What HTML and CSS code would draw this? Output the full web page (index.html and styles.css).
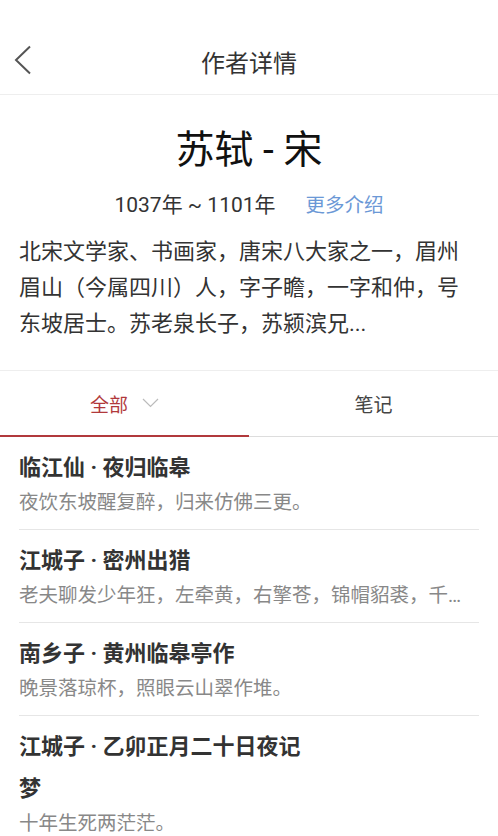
FILE: index.html
```html
<!DOCTYPE html>
<html lang="zh-CN">
<head>
  <meta charset="UTF-8">
  <meta name="viewport" content="width=device-width, initial-scale=1.0">
  <title>作者详情</title>
  <link rel="stylesheet" href="styles.css">
</head>
<body>

  <div class="header">
    <div class="header-bar">
      <svg class="back" width="18" height="30" viewBox="0 0 18 30">
        <polyline points="16,1.5 2,15 16,28.5" fill="none" stroke="#555" stroke-width="2"/>
      </svg>
      <h1>作者详情</h1>
    </div>
  </div>

  <div class="profile">
    <h2 class="name">苏轼 - 宋</h2>
    <div class="dates">
      <span class="years">1037年 ~ 1101年</span>
      <a class="more">更多介绍</a>
    </div>
    <p class="intro">北宋文学家、书画家，唐宋八大家之一，眉州眉山（今属四川）人，字子瞻，一字和仲，号东坡居士。苏老泉长子，苏颍滨兄...</p>
  </div>

  <div class="tabs">
    <div class="tab active">
      全部
      <svg class="arrow" width="17" height="10" viewBox="0 0 17 10">
        <polyline points="1,1 8.5,8.5 16,1" fill="none" stroke="#bbb" stroke-width="1.2"/>
      </svg>
    </div>
    <div class="tab">笔记</div>
  </div>

  <div class="list">
    <div class="item">
      <div class="item-title">临江仙 · 夜归临皋</div>
      <div class="item-text">夜饮东坡醒复醉，归来仿佛三更。</div>
    </div>
    <div class="item">
      <div class="item-title">江城子 · 密州出猎</div>
      <div class="item-text">老夫聊发少年狂，左牵黄，右擎苍，锦帽貂裘，千骑卷平冈。</div>
    </div>
    <div class="item">
      <div class="item-title">南乡子 · 黄州临皋亭作</div>
      <div class="item-text">晚景落琼杯，照眼云山翠作堆。</div>
    </div>
    <div class="item">
      <div class="item-title">江城子 · 乙卯正月二十日夜记梦</div>
      <div class="item-text">十年生死两茫茫。</div>
    </div>
  </div>

</body>
</html>
```

FILE: styles.css
```css
body {
  margin: 0;
  background: #fff;
  font-family: Roboto, "Noto Sans CJK SC", sans-serif;
  color: #333;
  overflow: hidden;
}
.header {
  padding-top: 28px;
  border-bottom: 1px solid #eee;
}
.header-bar {
  position: relative;
  height: 66px;
  display: flex;
  align-items: center;
  justify-content: center;
}
.header-bar .back {
  position: absolute;
  left: 14px;
  top: 17px;
}
.header-bar h1 {
  margin: 0;
  font-size: 24px;
  font-weight: normal;
  color: #333;
}
.profile {
  padding: 30px 19px 28px;
  border-bottom: 1px solid #eee;
}
.name {
  margin: 0;
  text-align: center;
  font-size: 39px;
  line-height: 50px;
  font-weight: normal;
  color: #111;
}
.dates {
  margin-top: 15px;
  display: flex;
  justify-content: center;
  align-items: baseline;
  gap: 30px;
  line-height: 30px;
  color: #333;
}
.years {
  font-size: 21px;
}
.more {
  font-size: 19.5px;
  color: #6b98d6;
}
.intro {
  margin: 13px 0 0;
  font-size: 22px;
  line-height: 36px;
  color: #333;
}
.tabs {
  display: flex;
}
.tab {
  flex: 1;
  height: 66px;
  box-sizing: border-box;
  display: flex;
  align-items: center;
  justify-content: center;
  gap: 14px;
  font-size: 19px;
  color: #444;
  border-bottom: 1px solid #ddd;
}
.tab.active {
  color: #b1393c;
  border-bottom: 2px solid #b1393c;
}
.list {
  padding: 0 19px;
}
.item {
  padding: 10px 0 12px;
  border-bottom: 1px solid #e6e6e6;
}
.item:last-child {
  border-bottom: none;
}
.item-title {
  max-width: 300px;
  font-size: 22px;
  line-height: 42px;
  font-weight: bold;
  color: #333;
}
.item-text {
  font-size: 19.5px;
  line-height: 28px;
  color: #888;
  white-space: nowrap;
  overflow: hidden;
  text-overflow: ellipsis;
}
```
